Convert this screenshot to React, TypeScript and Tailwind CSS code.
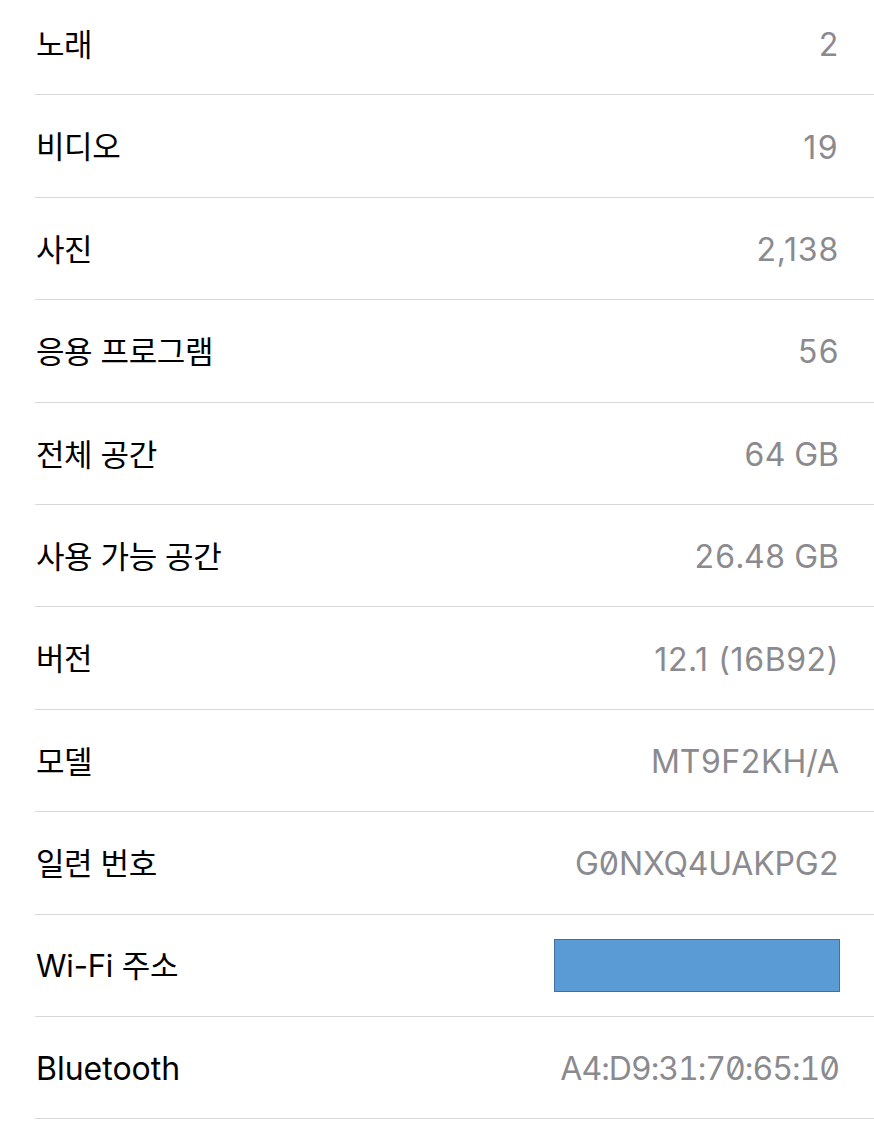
import React from "react";

type Row = { label: string; value?: string; redacted?: boolean; lc?: string; vc?: string };

const rows: Row[] = [
  { label: "노래", value: "2" },
  { label: "비디오", value: "19", vc: "tracking-[1.5px]" },
  { label: "사진", value: "2,138", vc: "tracking-[0.8px]" },
  { label: "응용 프로그램", value: "56" },
  { label: "전체 공간", value: "64 GB", vc: "tabular-nums" },
  { label: "사용 가능 공간", value: "26.48 GB", vc: "tabular-nums" },
  { label: "버전", value: "12.1 (16B92)", vc: "tracking-[0.6px]" },
  { label: "모델", value: "MT9F2KH/A", vc: "tabular-nums" },
  { label: "일련 번호", value: "G0NXQ4UAKPG2", vc: "tabular-nums slashed-zero tracking-[-0.2px]" },
  { label: "Wi-Fi 주소", redacted: true, lc: "text-[31px] tracking-[-0.2px]" },
  {
    label: "Bluetooth",
    value: "A4:D9:31:70:65:10",
    lc: "text-[32px] tracking-[0px]",
    vc: "tabular-nums slashed-zero tracking-[-1px]",
  },
];

export default function App() {
  return (
    <div
      className="w-[874px] h-[1125px] overflow-hidden bg-white"
      style={{ fontFamily: 'Inter, "Noto Sans CJK KR", sans-serif' }}
    >
      <div className="-mt-[7px] pl-[35px]">
        {rows.map((r) => (
          <div
            key={r.label}
            className="h-[102.4px] border-b border-[#d9d9dc] flex items-center justify-between pr-[35px] pt-[3px]"
          >
            <span className={"pl-[1px] text-black " + (r.lc ?? "text-[31px] tracking-[-0.4px]")}>
              {r.label}
            </span>
            {r.redacted ? (
              <div className="w-[286px] h-[53px] bg-[#5b9bd5] border-[1.5px] border-[#41719c] mr-[-1px] -mt-[3px]" />
            ) : (
              <span className={"text-[32px] text-[#8a8a8f] " + (r.vc ?? "tabular-nums")}>
                {r.value}
              </span>
            )}
          </div>
        ))}
      </div>
    </div>
  );
}
